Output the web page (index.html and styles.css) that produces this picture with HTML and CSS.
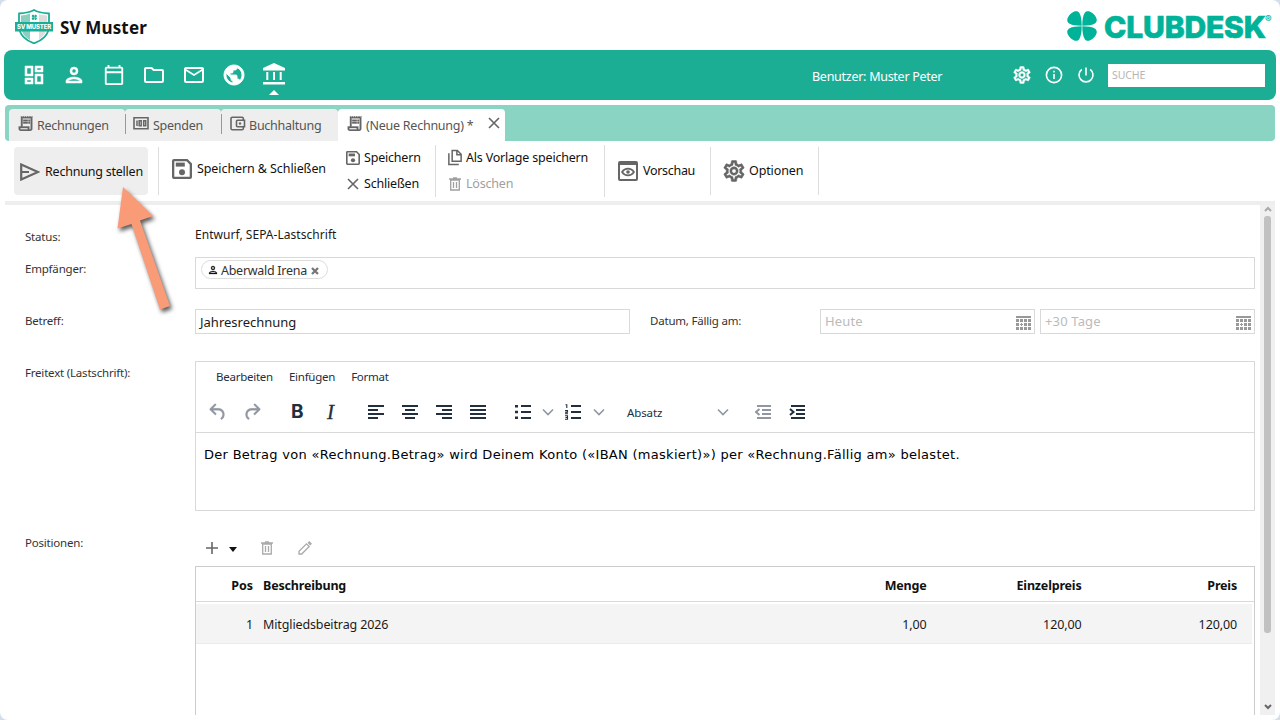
FILE: index.html
```html
<!DOCTYPE html>
<html lang="de">
<head>
<meta charset="utf-8">
<title>SV Muster – Neue Rechnung</title>
<link rel="stylesheet" href="styles.css">
</head>
<body>
<svg class="sprite" aria-hidden="true">
  <symbol id="dash" viewBox="0 0 24 24"><path d="M19 5v2h-4V5h4M9 5v6H5V5h4m10 8v6h-4v-6h4M9 17v2H5v-2h4M21 3h-8v6h8V3zM11 3H3v10h8V3zm10 8h-8v10h8V11zm-10 4H3v6h8v-6z" stroke="currentColor" stroke-width=".5"/></symbol>
  <symbol id="person" viewBox="0 0 24 24"><path fill-rule="evenodd" d="M12 4a4 4 0 1 0 0 8 4 4 0 0 0 0-8zm0 2a2 2 0 1 1 0 4 2 2 0 0 1 0-4zM12 14c-2.67 0-8 1.34-8 4v2h16v-2c0-2.66-5.33-4-8-4zm0 2c2.7 0 5.8 1.29 6 2H6c.23-.72 3.31-2 6-2z" stroke="currentColor" stroke-width=".5"/></symbol>
  <symbol id="cal" viewBox="0 0 24 24"><path d="M20 3h-1V1h-2v2H7V1H5v2H4c-1.1 0-2 .9-2 2v16c0 1.1.9 2 2 2h16c1.1 0 2-.9 2-2V5c0-1.1-.9-2-2-2zm0 18H4V10h16v11zm0-13H4V5h16v3z"/></symbol>
  <symbol id="folder" viewBox="0 0 24 24"><path d="M9.17 6l2 2H20v10H4V6h5.17M10 4H4c-1.1 0-1.99.9-1.99 2L2 18c0 1.1.9 2 2 2h16c1.1 0 2-.9 2-2V8c0-1.1-.9-2-2-2h-8l-2-2z"/></symbol>
  <symbol id="mail" viewBox="0 0 24 24"><path d="M22 6c0-1.1-.9-2-2-2H4c-1.1 0-2 .9-2 2v12c0 1.1.9 2 2 2h16c1.1 0 2-.9 2-2V6zm-2 0l-8 5-8-5h16zm0 12H4V8l8 5 8-5v10z"/></symbol>
  <symbol id="globe" viewBox="0 0 24 24"><path d="M12 2C6.48 2 2 6.48 2 12s4.48 10 10 10 10-4.48 10-10S17.52 2 12 2zm-1 17.93c-3.95-.49-7-3.85-7-7.93 0-.62.08-1.21.21-1.79L9 15v1c0 1.1.9 2 2 2v1.93zm6.9-2.54c-.26-.81-1-1.39-1.9-1.39h-1v-3c0-.55-.45-1-1-1H8v-2h2c.55 0 1-.45 1-1V7h2c1.1 0 2-.9 2-2v-.41c2.93 1.19 5 4.06 5 7.41 0 2.08-.8 3.97-2.1 5.39z" stroke="currentColor" stroke-width=".9"/></symbol>
  <symbol id="bank" viewBox="0 0 24 24"><path d="M12 0 23 5v2.500H1V5zM4.300 9h2v8h-2zM11 9h2v8h-2zM17.700 9h2v8h-2zM1 19h22v2.500H1z"/></symbol>
  <symbol id="gear" viewBox="0 0 24 24"><path stroke="currentColor" stroke-width=".5" d="M19.43 12.98c.04-.32.07-.64.07-.98 0-.34-.03-.66-.07-.98l2.11-1.65c.19-.15.24-.42.12-.64l-2-3.46c-.09-.16-.26-.25-.44-.25-.06 0-.12.01-.17.03l-2.49 1c-.52-.4-1.08-.73-1.69-.98l-.38-2.65C14.46 2.18 14.25 2 14 2h-4c-.25 0-.46.18-.49.42l-.38 2.65c-.61.25-1.17.59-1.69.98l-2.49-1c-.06-.02-.12-.03-.18-.03-.17 0-.34.09-.43.25l-2 3.46c-.13.22-.07.49.12.64l2.11 1.65c-.04.32-.07.65-.07.98 0 .33.03.66.07.98l-2.11 1.65c-.19.15-.24.42-.12.64l2 3.46c.09.16.26.25.44.25.06 0 .12-.01.17-.03l2.49-1c.52.4 1.08.73 1.69.98l.38 2.65c.03.24.24.42.49.42h4c.25 0 .46-.18.49-.42l.38-2.65c.61-.25 1.17-.59 1.69-.98l2.49 1c.06.02.12.03.18.03.17 0 .34-.09.43-.25l2-3.46c.12-.22.07-.49-.12-.64l-2.11-1.65zm-1.98-1.71c.04.31.05.52.05.73 0 .21-.02.43-.05.73l-.14 1.13.89.7 1.08.84-.7 1.21-1.27-.51-1.04-.42-.9.68c-.43.32-.84.56-1.25.73l-1.06.43-.16 1.13-.2 1.35h-1.4l-.19-1.35-.16-1.13-1.06-.43c-.43-.18-.83-.41-1.23-.71l-.91-.7-1.06.43-1.27.51-.7-1.21 1.08-.84.89-.7-.14-1.13c-.03-.31-.05-.54-.05-.74s.02-.43.05-.73l.14-1.13-.89-.7-1.08-.84.7-1.21 1.27.51 1.04.42.9-.68c.43-.32.84-.56 1.25-.73l1.06-.43.16-1.13.2-1.35h1.39l.19 1.35.16 1.13 1.06.43c.43.18.83.41 1.23.71l.91.7 1.06-.43 1.27-.51.7 1.21-1.07.85-.89.7.14 1.13zM12 8c-2.21 0-4 1.79-4 4s1.79 4 4 4 4-1.79 4-4-1.79-4-4-4zm0 6c-1.1 0-2-.9-2-2s.9-2 2-2 2 .9 2 2-.9 2-2 2z"/></symbol>
  <symbol id="receipt" viewBox="2 2 20 20"><path stroke="currentColor" stroke-width=".5" d="M19.500 3.500L18 2l-1.500 1.500L15 2l-1.500 1.500L12 2l-1.500 1.500L9 2 7.500 3.500 6 2v14H3v3c0 1.660 1.340 3 3 3h12c1.660 0 3-1.340 3-3V2l-1.500 1.500zM15 20H6c-.55 0-1-.45-1-1v-1h10v2zm4-1c0 .55-.45 1-1 1s-1-.45-1-1v-3H8V5h11v14zM9 7h6v2H9zM16 7h2v2h-2zM9 10h6v2H9zM16 10h2v2h-2z"/></symbol>
  <symbol id="money" viewBox="0 0 16 14"><path d="M1 1.200h14v11H1z" class="ln"/><path d="M4 4v5.500M6.200 4.300h2v5h-2zM10.700 4.300h2v5h-2z" fill="none" stroke="currentColor" stroke-width="1.500"/></symbol>
  <symbol id="wallet" viewBox="0 0 16 15"><path d="M13.300 4V2.500a1.300 1.300 0 0 0-1.300-1.300H2.300A1.300 1.300 0 0 0 1 2.500v10a1.300 1.300 0 0 0 1.300 1.300H12a1.300 1.300 0 0 0 1.300-1.300V11M7.500 4.200h7v6.600h-7a1 1 0 0 1-1-1V5.200a1 1 0 0 1 1-1z" class="ln"/><circle cx="10" cy="7.500" r="1.200"/></symbol>
  <symbol id="floppy" viewBox="0 0 20 20"><path fill-rule="evenodd" d="M2 0h13.500L20 4.500V18a2 2 0 0 1-2 2H2a2 2 0 0 1-2-2V2a2 2 0 0 1 2-2zm.3 2.200v15.600h15.400V5.400l-3.200-3.200z"/><path d="M3.800 3.600h9v4h-9z"/><circle cx="10" cy="13.200" r="3"/></symbol>
  <symbol id="x" viewBox="0 0 12 12"><path d="M1 1l10 10M11 1L1 11" class="ln"/></symbol>
  <symbol id="copy" viewBox="0 0 16 18"><path d="M5 1.500h5.500l4 4V13H5zM10 1.500V6h4.500M1.500 4.500v12H12" class="ln"/></symbol>
  <symbol id="trash" viewBox="0 0 12 14"><path d="M1.700 3h8.600v10H1.700zM0 2h12M4 1h4M4.500 5v6M7.500 5v6" class="ln thin"/></symbol>
  <symbol id="clover" viewBox="0 0 30 30"><path d="M14.700 14.700C14.700 9 14 4.500 12.200 1.800 10.600-.4 7.500 0 5.500 1.500 3.800 2.500 2.500 3.800 1.500 5.500 0 7.500-.4 10.600 1.800 12.200 4.500 14 9 14.700 14.700 14.700z" id="leaf"/><use href="#leaf" transform="matrix(-1 0 0 1 30 0)"/><use href="#leaf" transform="matrix(1 0 0 -1 0 30)"/><use href="#leaf" transform="matrix(-1 0 0 -1 30 30)"/></symbol>
  <symbol id="date" viewBox="0 0 15 14"><path d="M0 0h15v2H0zM0 3h3v3H0zM4 3h3v3H4zM8 3h3v3H8zM12 3h3v3h-3zM0 7h3v3H0zM5 7h1v1h1v1H6v1H5V9H4V8h1zM8 7h3v3H8zM12 7h3v3h-3zM0 11h3v3H0zM4 11h3v3H4zM8 11h3v3H8zM12 11h3v3h-3z"/></symbol>
  <symbol id="undo" viewBox="0 0 24 24"><path stroke="currentColor" stroke-width=".4" d="M6.400 8H12c3.700 0 6.200 2 6.800 5.100.6 2.700-.4 5.600-2.300 6.800a1 1 0 0 1-1-1.800c1.100-.6 1.800-2.700 1.400-4.600-.5-2.100-2.100-3.500-4.900-3.500H6.400l3.300 3.300a1 1 0 1 1-1.400 1.400l-5-5a1 1 0 0 1 0-1.400l5-5a1 1 0 0 1 1.400 1.400z"/></symbol>
  <symbol id="chev" viewBox="0 0 12 8"><path d="M1 1.500l5 5 5-5" class="ln"/></symbol>
</svg>

<div class="app">
  <header class="head">
    <svg class="crest" viewBox="0 0 38 35"><path d="M19 1c4 2.500 8 3 15 3.500V17c0 9-7.500 15-15 17.300C11.500 32 4 26 4 17V4.500C11 4 15 3.500 19 1z" fill="#fff" stroke="#1cae95" stroke-width="1.800"/><path d="M15 4.500C12 5.800 9 6.300 6 6.500V17c0 7 5 12 9 14z" fill="#8bcfc1"/><path d="M24 5c3 1 5 1.400 8 1.500V17c0 6-4 10.500-8 13.500z" fill="#ddd"/><path d="M0 13h38v9.500H0z" fill="#1cae95"/><g fill="#1cae95"><use href="#clover" x="16.500" y="5.500" width="5.500" height="5.500"/></g><text x="19" y="20" text-anchor="middle" textLength="34">SV MUSTER</text></svg>
    <h1>SV Muster</h1>
    <div class="brand"><svg><use href="#clover"/></svg><span class="word">CLUBDESK</span><span class="reg">®</span></div>
  </header>

  <nav class="nav">
    <svg><use href="#dash"/></svg><svg><use href="#person"/></svg><svg><use href="#cal" x="1" y="1" width="22" height="22"/></svg><svg><use href="#folder"/></svg><svg><use href="#mail"/></svg><svg><use href="#globe"/></svg><span class="here"><svg><use href="#bank"/></svg></span>
    <span class="user">Benutzer: Muster Peter</span>
    <svg class="sm" viewBox="1.500 1.500 21 21"><use href="#gear" width="24" height="24"/></svg>
    <svg class="sm" viewBox="0 0 18 18"><circle cx="9" cy="9" r="7.600" class="ln"/><path d="M9 8v5M9 4.800v1.600" class="ln"/></svg>
    <svg class="sm" viewBox="0 0 18 18"><path d="M9 1.500v8M4.800 3.300a7 7 0 1 0 8.400 0" class="ln"/></svg>
    <span class="search">SUCHE</span>
  </nav>

  <div class="tabs">
    <div class="tab t1"><svg><use href="#receipt"/></svg>Rechnungen</div>
    <div class="tab t2"><svg><use href="#money"/></svg>Spenden</div>
    <div class="tab t3"><svg><use href="#wallet"/></svg>Buchhaltung</div>
    <div class="tab on"><svg><use href="#receipt"/></svg>(Neue Rechnung) *<svg class="close"><use href="#x"/></svg></div>
  </div>

  <div class="ribbon">
    <div class="grp g1"><span class="primary"><svg viewBox="0 0 20 18"><path d="M1.200 1.500v15L18 9zM1.500 9H9" class="ln bold"/></svg>Rechnung stellen</span></div>
    <div class="grp g2"><svg><use href="#floppy"/></svg>Speichern &amp; Schließen</div>
    <div class="grp stack g3"><span><svg><use href="#floppy"/></svg>Speichern</span><span><svg class="cross"><use href="#x"/></svg>Schließen</span></div>
    <div class="grp stack g4"><span><svg class="copy"><use href="#copy"/></svg>Als Vorlage speichern</span><span class="off"><svg><use href="#trash"/></svg>Löschen</span></div>
    <div class="grp g5"><svg viewBox="0 0 20 20"><path fill-rule="evenodd" d="M2 0h16a2 2 0 0 1 2 2v16a2 2 0 0 1-2 2H2a2 2 0 0 1-2-2V2a2 2 0 0 1 2-2zm0 4v14h16V4z"/><path d="M4 11c3-4.500 9-4.500 12 0-3 4.500-9 4.500-12 0z" class="ln"/><circle cx="10" cy="11" r="1.800"/></svg>Vorschau</div>
    <div class="grp g6"><svg viewBox=".5 .5 23 23"><use href="#gear" width="24" height="24"/></svg>Optionen</div>
  </div>

  <div class="work">
    <main class="form">
      <div class="row status"><label>Status:</label><span>Entwurf, SEPA-Lastschrift</span></div>
      <div class="row rcpt"><label>Empfänger:</label><div class="box"><span class="chip"><svg><use href="#person"/></svg>Aberwald Irena<svg class="rm" viewBox="0 0 8 8"><path d="M1 1l6 6M7 1L1 7" stroke="currentColor" stroke-width="2.300"/></svg></span></div></div>
      <div class="row subj"><label>Betreff:</label><div class="inp big">Jahresrechnung</div><label class="due">Datum, Fällig am:</label><div class="inp ph">Heute<svg><use href="#date"/></svg></div><div class="inp ph">+30 Tage<svg><use href="#date"/></svg></div></div>
      <div class="row text"><label>Freitext (Lastschrift):</label>
        <div class="editor">
          <div class="menu"><span>Bearbeiten</span><span>Einfügen</span><span>Format</span></div>
          <div class="tools">
            <svg class="dim u"><use href="#undo"/></svg><svg class="dim r"><use href="#undo" transform="matrix(-1 0 0 1 22 0)"/></svg>
            <b>B</b><i>I</i>
            <svg class="al" viewBox="0 0 16 14"><path d="M0 1h16M0 5h10M0 9h16M0 13h10"/></svg>
            <svg class="al" viewBox="0 0 16 14"><path d="M0 1h16M3 5h10M0 9h16M3 13h10"/></svg>
            <svg class="al" viewBox="0 0 16 14"><path d="M0 1h16M6 5h10M0 9h16M6 13h10"/></svg>
            <svg class="al" viewBox="0 0 16 14"><path d="M0 1h16M0 5h16M0 9h16M0 13h16"/></svg>
            <svg class="al bul" viewBox="0 0 16 14"><path d="M6 1h10M6 7h10M6 13h10"/><path d="M0 1.200h3M0 7h3M0 12.800h3" stroke-width="2.400"/></svg>
            <svg class="cv c1"><use href="#chev"/></svg>
            <svg class="al num" viewBox="0 0 16 16"><path d="M6 2h10M6 8h10M6 14h10"/><path d="M.5.800h1.300V4M0 6.500h2.500v1.600H.8v1.600H3M0 11.700h2.500v3.500H0M.5 13.500h2" class="digits"/></svg>
            <svg class="cv c2"><use href="#chev"/></svg>
            <span class="para">Absatz</span><svg class="cv c3"><use href="#chev"/></svg>
            <svg class="al dim out" viewBox="0 0 16 14"><path d="M2 1h14M7 5h9M7 9h9M2 13h14"/><path d="M4.500 4L1 7l3.500 3" class="arrow"/></svg>
            <svg class="al in" viewBox="0 0 16 14"><path d="M2 1h14M7 5h9M7 9h9M2 13h14"/><path d="M1 4l3.500 3L1 10" class="arrow"/></svg>
          </div>
          <p>Der Betrag von «Rechnung.Betrag» wird Deinem Konto («IBAN (maskiert)») per «Rechnung.Fällig am» belastet.</p>
        </div>
      </div>
      <div class="row items"><label>Positionen:</label>
        <div class="list">
          <div class="actions"><svg class="plus" viewBox="0 0 12 12"><path d="M6 0v12M0 6h12" class="ln"/></svg><svg class="tri" viewBox="0 0 8 5"><path d="M0 0h8L4 5z"/></svg><svg class="bin"><use href="#trash"/></svg><svg class="pen" viewBox="0 0 14 14"><path d="M1 13V10.300L8.500 2.800l2.700 2.700L3.700 13z" class="ln thin"/><path d="M9.500 1.800L11.300 0 14 2.700l-1.800 1.800z"/></svg></div>
          <div class="table">
            <div class="tr th"><span>Pos</span><span>Beschreibung</span><span>Menge</span><span>Einzelpreis</span><span>Preis</span></div>
            <div class="tr td"><span>1</span><span>Mitgliedsbeitrag 2026</span><span>1,00</span><span>120,00</span><span>120,00</span></div>
          </div>
        </div>
      </div>
    </main>
    <div class="scroll"><svg viewBox="0 0 8 6"><path d="M1 5l3-3 3 3"/></svg><div class="thumb"></div><svg class="down" viewBox="0 0 8 6"><path d="M1 1l3 3 3-3"/></svg></div>
  </div>

  <svg class="pointer" viewBox="0 0 80 150"><path d="M23 17L53 46 40 50.500 70 136 60 139.500 31.500 54 17.500 58.500z"/></svg>
</div>
</body>
</html>
```
FILE: styles.css
```css
* { box-sizing: border-box; }
body { margin: 0; width: 1280px; height: 720px; overflow: hidden; background: #d3deea; font: 12.5px/18px "Noto Sans", "Open Sans", sans-serif; letter-spacing: -0.12px; color: #1a1a1a; }
.sprite { position: absolute; width: 0; height: 0; }
svg { fill: currentColor; flex: none; display: block; }
.ln { fill: none; stroke: currentColor; stroke-width: 1.6; }
.ln.thin { stroke-width: 1.3; }
.ln.bold { stroke-width: 2.2; }
.app { position: relative; width: 1280px; height: 720px; background: #fff; border-radius: 8px; display: flex; flex-direction: column; white-space: nowrap; }

.head { height: 50px; display: flex; align-items: center; padding: 0 7px 0 15px; }
.crest { width: 38px; height: 35px; margin-top: 2px; }
.crest text { font: 800 6px Inter, sans-serif; fill: #fff; }
h1 { margin: 5px auto 0 7px; font-size: 17px; line-height: 24px; font-weight: 700; letter-spacing: 0.15px; color: #111; }
.brand { display: flex; align-items: center; color: #00b398; height: 50px; padding-top: 2px; }
.brand svg { width: 30px; height: 30px; }
.word { font: 800 30px/30px Inter, sans-serif; margin: 1px 0 0 7px; width: 161px; letter-spacing: -0.15px; -webkit-text-stroke: 0.7px #00b398; }
.reg { font: 700 10px/12px Inter, sans-serif; width: 8px; margin-top: -14px; }

.nav { height: 50px; margin: 0 4px; border-radius: 8px; background: #1cae95; color: #fff; display: flex; align-items: center; padding: 0 11px 0 18px; gap: 16px; }
.nav > svg, .here svg { width: 24px; height: 24px; }
.here { position: relative; }
.here::after { content: ""; position: absolute; left: 7px; top: 27px; border: 5px solid transparent; border-top: 0; border-bottom-color: #fff; }
.user { margin-left: auto; width: 185px; padding-top: 3px; letter-spacing: -0.27px; }
.nav > .sm { width: 18px; height: 18px; margin-right: -2px; }
.nav > .sm + .sm { margin-left: 0; }
.search { width: 157px; height: 23px; margin-left: -1px; background: #fff; color: #b5b5b5; font-size: 10.5px; line-height: 23px; padding-left: 4px; }

.tabs { height: 36px; margin: 5px 5px 0; padding: 4px 0 0 4px; background: #8ad4c4; border-radius: 4px; display: flex; color: #555; }
.tab { position: relative; height: 32px; background: #eee; border-radius: 4px 4px 0 0; display: flex; align-items: center; padding: 1px 0 0 9px; line-height: 18px; font-size: 12.5px; letter-spacing: -0.25px; }
.tab svg { width: 15px; height: 15px; margin: -5px 4px 0 0; color: #666; }
.t1 { width: 116px; } .t2 { width: 96px; padding-left: 8px; } .t3 { width: 117px; }
.t2 svg { width: 16px; } .t3 svg { width: 16px; margin-right: 3px; }
.t2::before, .t3::before { content: ""; position: absolute; left: 0; top: 5px; width: 1px; height: 20px; background: #999; }
.on { width: 167px; background: #fff; }
.tab .close { width: 12px; height: 12px; margin: -5px 5px 0 auto; }

.ribbon { height: 64px; margin: 0 5px; border-bottom: 4px solid #eee; display: flex; color: #111; }
.grp { height: 48px; margin-top: 6px; border-right: 1px solid #ddd; display: flex; align-items: center; padding-top: 1px; }
.grp svg { width: 20px; height: 20px; margin-right: 5px; color: #666; }
.primary { display: flex; align-items: center; width: 134px; height: 48px; padding: 1px 0 0 6px; border-radius: 4px; background: #eee; letter-spacing: -0.22px; }
.grp .primary svg { height: 18px; }
.g1 { width: 154px; padding: 0 0 0 9px; }
.g2 { width: 182px; padding: 0 0 4px 13px; border: 0; letter-spacing: -0.09px; }
.g3 { width: 95px; padding: 0 0 0 5px; } .g4 { width: 169px; padding: 0 0 0 12px; }
.stack { height: 52px; margin-top: 4px; flex-direction: column; align-items: flex-start; letter-spacing: -0.2px; }
.stack span { height: 26px; display: flex; align-items: center; padding-bottom: 1px; }
.stack svg { width: 14px; height: 14px; margin-right: 4px; }
.stack .cross { width: 12px; height: 12px; margin: 0 5px 0 1px; }
.stack .copy { width: 16px; height: 17px; margin: 0 3px 0 -1px; }
.stack .off, .stack .off svg { color: #a0a0a0; }
.g5 { width: 106px; padding: 0 0 0 13px; letter-spacing: -0.3px; } .g6 { width: 108px; padding: 0 0 0 11px; }
.grp.g6 svg { width: 24px; height: 24px; margin-right: 3px; }

.work { height: 510px; margin: 0 5px; display: flex; overflow: hidden; }
.form { width: 1250px; padding-left: 20px; margin-right: 5px; }
.row { display: flex; }
.row > label { width: 170px; flex: none; font-size: 11.5px; letter-spacing: -0.2px; color: #333; }
.status { height: 52px; padding-top: 20px; } .status label { padding-top: 3px; } .status span { font-size: 12px; letter-spacing: 0.04px; padding-top: 1px; }
.rcpt { height: 52px; } .rcpt label { padding-top: 3px; }
.box { width: 1060px; height: 32px; border: 1px solid #d9d9d9; padding: 2px 5px; }
.chip { display: inline-flex; align-items: center; height: 19px; width: 127px; border: 1px solid #ddd; border-radius: 10px; padding: 1px 0 0 5px; color: #333; line-height: 17px; letter-spacing: -0.28px; }
.chip svg { width: 12px; height: 12px; margin-right: 2px; color: #111; }
.chip .rm { width: 8px; height: 8px; color: #777; margin: 1px 0 0 4px; }
.subj { height: 52px; } .subj label { padding-top: 3px; }
.inp { flex: none; height: 25px; width: 215px; border: 1px solid #d9d9d9; padding: 0 3px 0 4px; line-height: 24px; display: flex; font-size: 13px; letter-spacing: 0; margin-right: 5px; }
.big { width: 435px; margin-right: 20px; }
.ph { color: #bbb; line-height: 23px; letter-spacing: 0.15px; } .ph svg { width: 15px; height: 14px; margin: 6px 0 0 auto; color: #999; }
.text { height: 170px; } .text label { padding-top: 3px; }
.editor { width: 1060px; height: 150px; border: 1px solid #d9d9d9; }
.menu { height: 30px; display: flex; gap: 16px; padding: 6px 0 0 20px; font-size: 11.5px; letter-spacing: -0.25px; color: #222f3e; }
.tools { height: 41px; border-bottom: 1px solid #d9d9d9; display: flex; align-items: center; color: #222f3e; }
.tools svg { width: 16px; height: 14px; }
.tools .dim { color: #9097a0; }
.tools .u, .tools .r { width: 22px; height: 24px; }
.tools .u { margin-left: 11px; } .tools .r { margin-left: 12px; }
.tools b { font: 700 19px/24px Inter, sans-serif; width: 14px; margin-left: 28px; }
.tools i { font: italic 21px/24px "Liberation Serif", serif; width: 10px; margin: 0 13px 0 22px; -webkit-text-stroke: 0.3px; }
.al { stroke: currentColor; stroke-width: 2; fill: none; margin-left: 18px; }
.digits { stroke-width: 1.1; } .arrow { stroke-width: 2; }
.tools .bul { margin-left: 29px; } .tools .num { width: 16px; height: 16px; margin-left: 11px; }
.tools .cv { width: 12px; height: 8px; color: #9097a0; } .tools .c1 { margin-left: 11px; } .c2 { margin-left: 12px; }
.para { margin-left: 22px; font-size: 11.5px; width: 90px; padding-top: 2px; }
.tools .c3 { margin-left: 0; } .tools .out { margin-left: 26px; }
.editor p { margin: 13px 8px; font: 13px/18px "DejaVu Sans", sans-serif; letter-spacing: 0.285px; color: #000; }
.items label { padding-top: 3px; }
.actions { height: 35px; display: flex; align-items: center; padding: 0 0 1px 11px; color: #666; }
.actions svg { width: 12px; height: 12px; }
.actions .tri { width: 8px; height: 5px; margin: 2px 24px 0 11px; color: #111; }
.actions .bin, .actions .pen { height: 14px; color: #aaa; } .actions .pen { width: 14px; margin-left: 25px; }
.table { width: 1060px; height: 160px; border: 1px solid #ccc; }
.tr { display: grid; grid-template-columns: 57px 473.5px 200px 155px 155.5px; align-items: center; text-align: right; }
.tr span:nth-child(2) { text-align: left; padding-left: 10px; }
.th { height: 35px; border-bottom: 1px solid #d9d9d9; font-weight: 700; letter-spacing: -0.18px; color: #111; padding-top: 3px; }
.th span:first-child { letter-spacing: 0; }
.td { height: 40px; margin: 2px 2px 0 0; background: #f4f4f4; border-bottom: 1px solid #eaeaea; padding-top: 2px; }
.scroll { width: 15px; background: #f0f0f0; }
.scroll svg { width: 8px; height: 6px; margin: 1px 0 4px 4px; fill: none; stroke: #aaa; stroke-width: 2; }
.thumb { width: 7px; height: 417px; margin-left: 4px; border-radius: 3px; background: #c1c1c1; }
.scroll .down { margin-top: 71px; stroke: #666; }
.pointer { position: absolute; left: 100px; top: 170px; width: 80px; height: 150px; fill: #fa9b78; filter: drop-shadow(2px 3px 2px rgba(0,0,0,.65)); }
```
